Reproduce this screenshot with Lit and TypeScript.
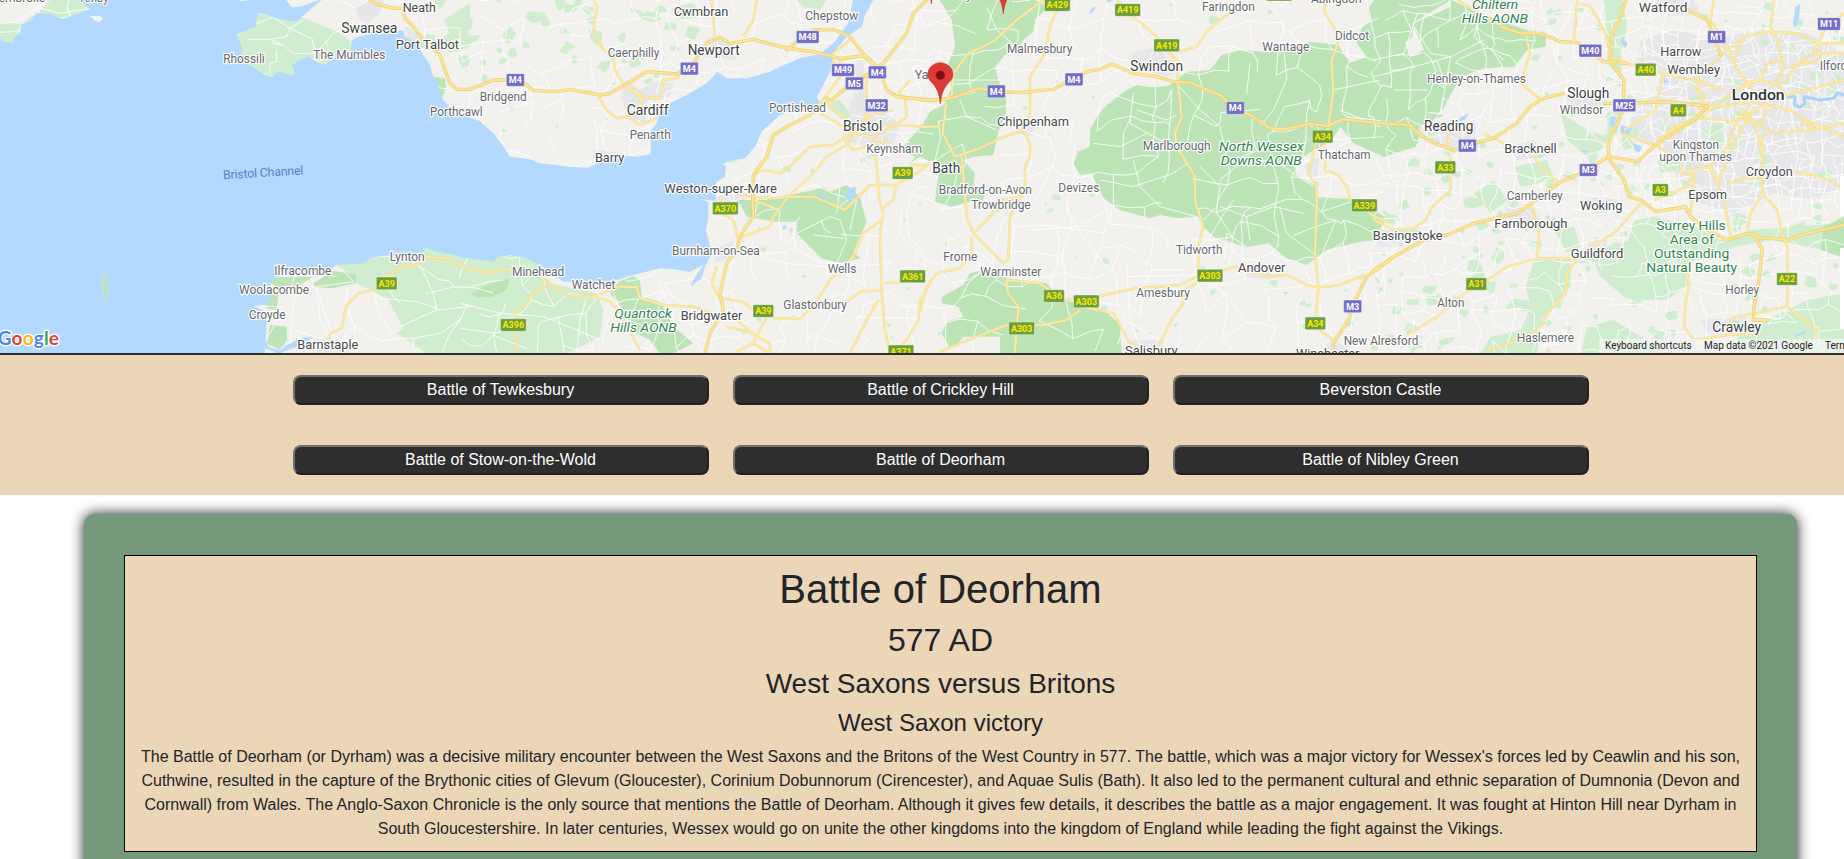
import { LitElement, html, svg, css } from "lit";
import { customElement } from "lit/decorators.js";

/* Map drawing units are thirds of a pixel; each sheet has its own x origin. */
const A = 0, B = 1380, C = 2760, D = 4122;

type Shape = [number, string];
type Label = [number, string, number, number, number, string];
type Shield = [number, string, number, number];

const forest: Shape[] = [
  [C, "M60,0H345L385,20L345,60L340,95L310,120L290,150L255,165L225,200L235,240L258,290L258,340L235,395L220,465L165,470L130,480L165,520L160,560L195,575L190,600L130,610L95,620L45,605L50,560L60,500L0,470L-30,490L-15,470L-60,450L10,370L30,335L70,315L95,265L85,190L105,140L95,60Z"],
  [C, "M800,215L870,210L905,165L960,150L1050,157L1170,125L1255,135L1290,190L1340,170L1310,130L1325,85L1355,60L1410,75L1450,110L1475,190L1480,270L1560,320L1500,350L1495,430L1392,470L1300,430L1262,380L1235,420L1150,470L1125,500L1130,525L1190,560L1195,592L1300,597L1395,650L1370,720L1320,725L1220,750L1160,795L1100,775L1045,730L980,742L880,710L850,680L835,650L770,655L720,645L690,655L600,630L545,590L515,520L480,525L460,490L475,455L510,440L510,390L530,350L560,315L620,270L650,255L690,262L745,258L770,240Z"],
  [C, "M210,805L260,835L380,850L430,900L520,920L560,935L600,975L605,1060H240L240,1010L130,1010L110,1035L85,1040L65,1000L80,965L130,950L115,920L65,910L65,890L130,855L150,820Z"],
  [B, "M835,600L920,600L985,585L1060,570L1090,562L1110,575L1160,555L1200,590L1208,625L1220,665L1180,755L1200,775L1140,790L1085,775L1010,700L1010,665L945,665L860,650Z"],
  [B, "M450,880L475,845L520,828L540,840L545,890L600,905L640,980L700,1030L640,1060H600L570,1020L510,990L500,940Z"],
  [A, "M810,850L830,832L940,830L900,855L830,860ZM940,850L1000,812L1070,825L1065,850L1000,865L945,862ZM810,975L860,980L862,1020L840,1050L800,1030ZM800,880L835,885L830,930L800,925ZM1300,230L1335,235L1338,260L1326,298Z"],
  [D, "M230,0H0L-20,30L5,90L20,130L60,160L115,110L120,70L230,20ZM115,70L230,0L370,60L515,110L515,140L460,150L420,200L330,205L260,230L200,340L170,335L75,320L0,285L-60,240L10,180L60,200L150,150Z"],
  [D, "M0,90L60,180L170,160L200,340L75,320L0,290ZM0,285L130,335L210,345L130,385L125,440L30,470L0,455Z"],
  [D, "M1410,650L1350,680L1340,750L1400,770L1410,765ZM1400,780L1410,745V775Z"],
];

const park: Shape[] = [
  [A, "M1165,900L1210,985L1190,1000L1280,1060H1700L1800,1010L1810,930L1790,880L1650,850L1600,775L1500,765L1410,778L1280,742L1262,765L1115,773L1010,795L1060,845L1130,880Z"],
  [A, "M0,66L60,72L95,62L150,0H240L270,28L190,57L108,40L64,73L36,128L0,128Z"],
  [A, "M775,40L820,52L850,60L905,50L1000,90L1050,120L1052,150L975,195L925,168L875,195L885,222L820,233L728,190L710,103Z"],
  [A, "M1320,120L1400,60L1410,140L1350,160ZM1300,0L1340,0L1320,30ZM1330,60L1410,10V70L1350,100Z"],
  [D, "M690,0L745,0L760,80L740,160L745,240L700,190L700,110ZM700,330L740,320L730,400L700,420Z"],
  [D, "M480,780L590,775L590,860L500,960L490,1060H320L350,1010L440,990L470,920L455,860ZM590,790L700,740L850,700L940,760L935,860L880,900L760,900L680,830L660,790Z"],
  [D, "M640,760L760,730L780,660L840,650L960,680L1040,720L1130,690L1400,670V760L1200,720L1080,740L940,790L700,820ZM540,690L600,680L620,740L580,760ZM620,1060L640,980L720,960L800,1010L900,1060Z"],
  [D, "M1180,960L1300,900L1410,880V1060H1120L1080,1020ZM300,580L360,540L400,600L350,640ZM560,340L640,390L690,440L650,480L580,420ZM420,500L520,480L540,540L440,560ZM1000,380L1050,370L1045,430L1005,440ZM850,480L930,470L910,510L860,520Z"],
  [B, "M1090,310L1140,300L1180,350L1150,360ZM480,100L500,100L490,130ZM1010,0H1100L1080,30L1030,20ZM640,20L700,10L720,50L650,60Z"],
];

const moor: Shape[] = [
  [B, "M30,880L90,850L150,835L140,870L100,890L50,893Z"],
  [A, "M305,820L318,824L322,860L328,890L312,892Z"],
];

const urban: Shape[] = [
  [D, "M800,120L900,90L1030,120L1100,100L1180,90L1300,100L1410,160V560L1320,600L1200,580L1080,640L950,600L900,520L860,440L760,400L780,330L740,300L840,290L860,220L790,180Z"],
  [D, "M130,370L300,360L310,420L220,445L140,420ZM560,280L690,290L700,320L600,320ZM390,620L480,610L500,690L420,690ZM650,590L740,600L720,640L660,640ZM980,960L1120,950L1100,1010L1000,1000ZM640,720L700,720L690,790L650,780ZM1150,540L1190,530L1180,600L1150,590ZM1020,540L1060,560L1030,620L1000,610ZM840,0H960L980,40L880,50ZM400,440L480,420L520,470L430,480ZM0,690L100,690L90,740L10,740Z"],
  [B, "M500,240L540,270L600,240L640,250L630,290L560,310L560,370L510,360L480,290ZM1170,300L1200,290L1260,330L1320,370L1300,440L1220,440L1150,420ZM1190,180L1210,180L1215,300L1180,300ZM770,590L850,580L860,610L780,620ZM740,110L800,120L830,180L730,170ZM400,450L490,460L480,490L400,480ZM820,720L780,740L760,790L820,770Z"],
  [C, "M630,160L710,140L740,170L790,210L740,230L640,200ZM40,500L100,480L130,520L60,545ZM980,790L1060,800L1050,840L980,830ZM280,350L350,370L330,410L290,400ZM230,590L300,600L260,640ZM1150,500L1200,460L1190,540ZM630,1020L730,1020L720,1060H640ZM1235,1020L1280,1040V1060H1200Z"],
  [A, "M1065,20L1120,0H1150L1140,40L1105,70L1080,60ZM1215,80L1270,110L1250,130L1220,110ZM940,1020L1000,1010L1060,1050L950,1060Z"],
];

const waterWest =
  "M0,0H1410V1060H0Z" +
  "M0,0H240L270,28L220,45L190,57L150,42L108,40L95,62L64,73L60,98L45,108L36,128L12,126L0,115Z" +
  "M270,48L300,48L310,57L298,67L285,62ZM718,0H745L735,3H722Z" +
  "M858,0L875,22L900,20L930,10L960,0Z" +
  "M775,40L795,42L820,52L850,60L890,65L905,50L935,25L965,0H1410V350L1370,335L1340,312L1326,295L1310,245L1298,225L1290,195L1270,165L1250,130L1215,112L1210,92L1190,92L1130,98L1070,112L1055,122L1052,150L1000,175L975,195L950,185L925,168L900,180L875,195L885,222L865,225L840,215L825,218L820,233L790,222L750,195L728,190L725,140L710,103L740,90L765,80Z" +
  "M305,820L318,824L322,860L328,890L312,892Z" +
  "M1280,742L1300,752L1410,775V1060H840L890,1040L940,1012L910,1012L860,1035L840,1052L805,1040L797,1020L800,960L795,935L762,918L800,915L815,880L810,850L830,830L990,810L1010,795L1090,790L1115,773L1140,768L1262,765Z" +
  "M795,1045L825,1055V1060H795Z";

const waterChannel =
  "M0,345L58,362L100,400L120,425L150,470L210,478L240,490L330,500L385,503L420,485L500,468L530,470L572,463V425L570,395L590,370L600,335L630,310L680,285L740,250L772,215L800,235L860,235L930,215L960,200L1020,175L1080,162L1120,130L1165,70L1175,20L1180,0H1240L1215,45L1205,80L1160,110L1135,140L1120,165L1110,215L1090,255L1070,290L1080,310L1010,325L960,345L905,395L885,440L855,475L820,480L788,492L798,500L795,530L770,545L765,570L770,602L720,598L745,606L745,650L738,690L748,730L755,760L735,800L725,835L700,852L698,862L717,885L693,855L700,840L730,795L690,815L640,808L600,805L520,825L470,840L420,845L310,845L260,808L200,775L150,765L115,772L100,785L0,772Z";

const lakes: Shape[] = [
  [B, "M1075,578L1105,592L1100,600L1080,592ZM1165,565L1188,560L1185,590L1168,605L1155,590ZM968,678L980,676L978,688L968,688Z"],
  [C, "M505,45L515,25L530,20L515,40ZM560,0H580L565,8ZM1090,875L1105,878L1095,884Z"],
  [D, "M1265,20L1278,12L1275,60L1262,85L1256,70ZM745,110L760,130L755,145L742,130ZM710,350L725,350L720,385L708,375ZM740,375L775,385L760,405L740,400ZM780,430L805,440L795,458L780,450ZM255,355L285,338L275,358L258,364ZM870,235L885,245L870,250ZM1262,1005L1298,992L1290,1002L1265,1010ZM620,450L645,452L635,460Z"],
];

const motorways: Shape[] = [
  [A, "M1110,0L1125,10L1180,25L1210,25L1215,55L1240,80L1270,120L1320,165L1335,210L1350,250L1370,268H1410L1480,240H1560L1600,272L1670,275L1710,268L1800,285L1830,280L1900,240L1940,215L2030,222L2080,190L2100,160L2120,130L2160,112L2190,130L2260,118L2340,140L2400,150L2440,155L2520,175L2590,168L2640,210L2660,270L2690,290L2790,300L2850,295"],
  [C, "M0,300H60L110,290L175,265L240,275L300,278L400,268L440,245L500,215L540,208L575,192L640,220L710,230L760,245L810,248L900,285L940,320L990,345L1050,385L1090,388L1170,372L1225,378L1265,358L1380,370L1470,375L1500,405L1545,430L1600,450L1660,430L1720,415L1790,370L1830,320L1870,295L1930,280"],
  [B, "M980,150L1010,125L1060,90L1120,88L1170,110L1205,155L1250,200L1270,190L1340,100L1360,40L1400,0"],
  [B, "M1250,200L1220,225L1150,270L1115,300L1100,295L1080,310L1050,345L990,375L940,405L920,470L880,525L878,600L880,650L845,700L830,750L800,790L780,880L790,930L750,1000L735,1060"],
  [D, "M755,0L740,50L715,100L708,170L720,200L750,240L748,330L715,400L702,440L705,475L750,540L765,590L800,600L845,635L935,620L950,650L1000,690L1060,720L1120,700L1155,712L1240,720L1300,700L1410,675"],
  [D, "M0,810L60,770L150,720L220,705L300,670L430,640L520,575L560,545L620,520L705,470L790,485L850,430L960,360L1000,320"],
  [D, "M690,310L760,310L880,305L1000,318M380,80L440,100L500,100L560,125L610,128L690,185L760,190M940,30L1000,60L1020,110L1040,165"],
  [C, "M1410,780L1340,830L1310,890L1285,960L1240,1030V1060"],
  [D, "M1140,700L1165,750L1155,840L1140,920L1138,960L1180,960"],
];

const aroads: Shape[] = [
  [A, "M985,1020L990,1000L1025,985L1040,915L1075,880L1120,870L1160,830L1210,800L1260,792L1280,770L1340,775L1400,805L1460,818L1520,808L1600,820L1650,850L1700,885L1780,890L1860,860L1910,862L1920,895L1990,915L2080,920L2150,945L2210,960L2270,1010L2310,1030V1060"],
  [B, "M270,850L220,875L205,905L165,940L170,1060M400,890L450,905L480,940L540,1050M400,0L412,20L400,90L430,150L460,170L465,210L490,250L540,290L545,330M490,250L550,290L600,295L610,240L650,235L680,200M415,290L440,330L470,355L500,350L540,375L590,355M755,0L765,110M890,0L880,60L850,110M545,290L530,340"],
  [B, "M1100,300L1110,320L1150,350L1190,390M1080,340L1170,390M880,525L910,510L965,520L1010,480L1050,440L1120,435L1200,380L1240,340L1300,330M1120,200V160L1170,120M1220,230V340L1200,380M1190,390L1160,435L1100,470L1060,520L985,590L940,595L870,590L830,580M985,590L1060,590L1155,630L1230,555L1310,555L1400,500M985,590L940,650L930,680L850,710M945,625L880,600M780,590L785,640L820,660L835,720L830,750M1240,410L1250,500L1258,600L1270,640L1260,700L1265,880L1275,990L1290,1060M1265,660L1210,700L1180,770L1110,840L1060,920L1020,955H940M1310,555L1300,600L1270,625M780,895L850,905L880,930M880,1000L800,980M920,950L880,1030L830,1055M880,1030L930,1060M1265,870L1200,875L1160,905M1255,900L1220,960L1170,1060M1275,850L1330,845M1150,420L1180,450L1220,440L1290,420M1180,400L1240,410L1300,380L1340,350L1335,290L1290,280M1220,370L1400,380M1315,280L1350,240M770,800L755,850L780,900M1410,850L1380,900L1375,960L1340,1020L1300,1060M1190,170L1140,180V230L1090,300"],
  [C, "M-30,495L30,495M0,380L60,380M95,290L100,220L145,160L220,125L290,60L370,0M78,310L68,400L105,470L180,445L240,415L310,390L330,430V470L315,500V560L270,650L265,780L250,790L160,700L140,650L135,590L125,470M410,30L390,80L375,160L330,230L330,340L310,390M160,700L210,650L250,600L310,590M155,710V760L120,805L50,820L20,860L0,935M590,0L640,50L710,110L740,150L770,180L775,260L785,350L765,400L770,440L825,530V600L850,680L835,740V830M780,155L830,140L860,95L900,60L940,30M1215,0V40L1260,110L1235,180L1240,270L1225,380L1215,420V510L1255,525L1285,570L1290,600L1350,640L1390,665H1410M1190,420L1165,520L1190,560V620L1185,760L1195,860L1185,980L1240,1020M260,840L360,850L430,900L540,888L650,865L780,855L830,830L950,800L1040,830L1100,825L1160,855L1200,862L1260,855L1335,825M485,920L580,940L630,1030L700,1060M480,930L440,960L370,975H260L170,1010L60,1055M258,840L265,880L295,920L290,980L285,1060M830,850L790,870V910L760,950L720,1030L700,1060"],
  [D, "M0,660L60,690L120,685L155,660L175,620L230,570V470M225,445L222,380M480,470L500,500L550,545M455,100L468,160L440,250L500,300M610,0L600,120M620,10L650,20L690,90L715,170L760,190L860,220L960,240L1050,270M330,400L390,430M470,610L495,700L490,775L400,800L340,840L270,880L190,950L100,1005M490,775H610L660,735L720,700L800,610M610,775L580,820L575,880L520,940L500,980L440,1020L340,1050M250,0L330,50L430,100M870,590L940,560L955,520H920V480L850,440L740,400M870,220L850,300L845,330L750,390M840,600L940,560M960,520L950,640M1000,490L1030,550L1080,430L1130,340M1060,550L1120,535L1165,530M1165,400V580L1130,640L1120,690M1165,580L1210,630L1225,710L1240,740V920L1330,990L1325,1020M935,760L945,860L935,900L930,980L960,1020L1060,1005L1140,1000M1060,980L1080,950L1150,940L1240,918M1260,515L1320,525L1380,545L1410,575"],
];

const cityRoads: Shape[] = [
  [D, "M1020,0L1010,60L1060,140L1090,210L1120,250L1150,290M1080,140L1110,110L1180,95L1270,100L1330,130L1410,130M1200,0L1190,80L1210,120L1230,200L1200,260M1410,40L1350,90L1320,160L1270,190L1230,250M1150,300L1220,290L1300,270L1410,240M1160,310L1250,330L1290,360L1410,410M1150,300L1050,320L980,310M1170,230L1100,260L1050,300L980,350L900,380L850,440M1060,360L980,355L930,370L850,420M1110,330L1080,380L1060,440L1010,500M1130,350L1150,400L1165,470M1120,350L1200,400L1300,390L1410,370M1150,330L1060,370M1160,240L1180,190L1230,180M970,220L980,300M1320,160L1410,160M1280,370L1330,380M940,510L1010,500L1050,600L1070,710M1080,180L1100,130L1060,145L1030,180L980,220M1130,300L1180,330L1160,370L1110,360ZM1330,130L1340,180L1250,200M970,330L990,290L960,260M1085,270L1150,240L1215,255L1240,300"],
];

const minor: Shape[] = [
  [A, "M0,70L50,66L75,50L110,22L180,40L270,25M745,118H810L860,110L870,85L910,60M810,118L850,135L880,160L950,160L1000,100L1060,70M830,150V185L810,190V220M850,135L815,130M870,1040L880,900L940,860M950,860L960,960L1000,1020M1120,870L1140,950L1180,1000M1260,795L1300,880L1310,930L1410,920M1310,930L1200,980M1140,895L1250,905L1310,925M880,990L980,1020M1020,800L1060,845L940,862"],
  [B, "M0,985L110,1000L160,980M0,910L120,940L250,950L350,990L420,1020M380,890L360,960L350,1060M1010,700L1110,650L1140,660L1160,720L1130,790M1060,705L1150,715M1140,560L1130,640M1190,600L1170,690M820,760L860,760L980,790L1100,800M600,850L640,960"],
  [C, "M200,20L230,90L300,150M100,240H240M120,300L140,350L230,390M640,280L630,370L720,420L760,430M650,330L740,360L770,345M770,250L840,330L900,380L920,470M990,190L980,280M1090,130L1100,240L1060,330L1020,380M520,430L600,440L680,400M540,540L640,560L760,520L800,490M640,480L660,560L720,620L830,650M840,500L900,560L890,620L850,660M900,540L960,490L1060,480L1180,560M900,620L980,650L1060,620L1150,640M980,650L990,720M1080,620L1100,700L1180,760M1235,420L1390,410M1260,330L1380,380M1240,270L1380,240M870,710L900,660L940,600M620,800L630,960L660,1040M620,830L830,825M440,620L480,700L560,800M330,690L480,680L560,630M910,800L920,700L980,740"],
  [D, "M0,230L120,200L230,170L330,120M120,80L170,160L230,170L200,340M330,10L300,110L390,180M0,180L90,160L130,40M60,270L160,270"],
];

const labels: Label[] = [
  [A, "embroke", -4, 136, 6, "s"], [A, "Tenby", 235, 326, 6, "s"], [A, "Neath", 1208, 1308, 36, "m"],
  [A, "Swansea", 1024, 1192, 99, "l"], [A, "Port Talbot", 1187, 1377, 146, "m"], [A, "The Mumbles", 940, 1156, 178, "s"],
  [A, "Rhossili", 670, 794, 190, "s"], [A, "Porthcawl", 1290, 1448, 347, "s"], [A, "Lynton", 1169, 1274, 784, "s"],
  [A, "Ilfracombe", 823, 994, 826, "s"], [A, "Woolacombe", 717, 927, 883, "s"], [A, "Croyde", 746, 857, 958, "s"],
  [A, "Barnstaple", 892, 1075, 1048, "m"],
  [B, "Cwmbran", 641, 805, 48, "m"], [B, "Chepstow", 1036, 1195, 60, "s"], [B, "Caerphilly", 443, 598, 172, "s"],
  [B, "Newport", 683, 839, 165, "l"], [B, "Bridgend", 59, 200, 303, "s"], [B, "Cardiff", 500, 626, 345, "l"],
  [B, "Penarth", 509, 632, 418, "s"], [B, "Barry", 405, 493, 487, "m"], [B, "Portishead", 927, 1098, 337, "s"],
  [B, "Bristol", 1149, 1267, 393, "l"], [B, "Keynsham", 1219, 1386, 460, "s"], [B, "Yate", 1364, 1438, 238, "s"],
  [B, "Weston-super-Mare", 613, 951, 579, "m"], [B, "Burnham-on-Sea", 636, 899, 766, "s"], [B, "Minehead", 156, 313, 828, "s"],
  [B, "Watchet", 335, 466, 867, "s"], [B, "Wells", 1103, 1189, 818, "s"], [B, "Glastonbury", 970, 1161, 927, "s"],
  [B, "Bridgwater", 662, 847, 961, "m"], [B, "Quantock", 463, 636, 955, "p"], [B, "Hills AONB", 451, 650, 996, "p"],
  [C, "Tetbury", 38, 155, -2, "s"], [C, "Malmesbury", 261, 457, 158, "s"], [C, "Faringdon", 846, 1004, 32, "s"],
  [C, "Abingdon", 1173, 1325, 10, "s"], [C, "Didcot", 1245, 1347, 121, "s"], [C, "Wantage", 1027, 1168, 154, "s"],
  [C, "Swindon", 631, 789, 214, "l"], [C, "Chippenham", 231, 447, 378, "m"], [C, "Marlborough", 668, 872, 451, "s"],
  [C, "North Wessex", 897, 1151, 453, "p"], [C, "Downs AONB", 902, 1145, 494, "p"], [C, "Thatcham", 1193, 1352, 476, "s"],
  [C, "Bath", 37, 121, 519, "l"], [C, "Bradford-on-Avon", 56, 336, 581, "s"], [C, "Trowbridge", 154, 332, 626, "s"],
  [C, "Devizes", 415, 538, 576, "s"], [C, "Frome", 70, 172, 782, "s"], [C, "Warminster", 181, 364, 827, "s"],
  [C, "Tidworth", 768, 907, 763, "s"], [C, "Andover", 954, 1096, 816, "m"], [C, "Amesbury", 649, 810, 892, "s"],
  [C, "Salisbury", 615, 773, 1066, "m"], [C, "Winchester", 1128, 1318, 1075, "m"],
  [D, "Chiltern", 294, 433, 26, "p"], [D, "Hills AONB", 263, 462, 68, "p"], [D, "Watford", 794, 941, 36, "m"],
  [D, "Harrow", 859, 982, 169, "m"], [D, "Wembley", 880, 1038, 222, "m"], [D, "Ilford", 1337, 1420, 211, "s"],
  [D, "London", 1073, 1232, 300, "x"], [D, "Henley-on-Thames", 159, 456, 248, "s"], [D, "Slough", 580, 706, 294, "l"],
  [D, "Windsor", 557, 688, 343, "s"], [D, "Reading", 150, 298, 393, "l"], [D, "Bracknell", 391, 548, 458, "m"],
  [D, "Kingston", 896, 1035, 446, "s"], [D, "upon Thames", 856, 1074, 482, "s"], [D, "Croydon", 1115, 1256, 528, "m"],
  [D, "Camberley", 398, 566, 599, "s"], [D, "Epsom", 943, 1059, 598, "m"], [D, "Woking", 618, 745, 631, "m"],
  [D, "Farnborough", 361, 580, 684, "m"], [D, "Basingstoke", -4, 206, 720, "m"], [D, "Guildford", 590, 748, 773, "m"],
  [D, "Surrey Hills", 847, 1055, 690, "r"], [D, "Area of", 887, 1020, 732, "r"], [D, "Outstanding", 840, 1066, 774, "r"],
  [D, "Natural Beauty", 817, 1089, 815, "r"], [D, "Horley", 1054, 1155, 882, "s"], [D, "Alton", 190, 271, 921, "s"],
  [D, "Haslemere", 428, 600, 1025, "s"], [D, "New Alresford", -91, 133, 1034, "s"], [D, "Crawley", 1015, 1161, 995, "l"],
  [D, "Horsham", 860, 1015, 1070, "f"],
];

const shields: Shield[] = [
  [A, "A39", 1160, 850], [B, "M4", 166, 240], [B, "M4", 688, 206], [B, "M48", 1043, 111], [B, "M49", 1149, 210],
  [B, "M5", 1183, 250], [B, "M4", 1252, 217], [B, "M32", 1250, 316], [B, "A39", 1328, 519], [B, "A370", 796, 625],
  [B, "A361", 1358, 829], [B, "A39", 910, 933], [B, "A396", 160, 975], [B, "A371", 1323, 1054],
  [C, "A429", 412, 15], [C, "A419", 623, 30], [C, "A419", 740, 136], [C, "A420", 1078, -16], [C, "M4", 229, 274], [C, "M4", 462, 238],
  [C, "M4", 946, 324], [C, "A34", 1208, 410], [C, "A339", 1333, 616], [C, "A303", 870, 827], [C, "A36", 402, 888],
  [C, "A303", 499, 904], [C, "A303", 305, 985], [C, "M3", 1298, 919], [C, "A34", 1186, 970],
  [D, "M11", 1365, 72], [D, "M1", 1028, 111], [D, "M40", 649, 152], [D, "A40", 815, 209], [D, "M25", 751, 316],
  [D, "A4", 913, 331], [D, "M4", 280, 437], [D, "A33", 214, 502], [D, "M3", 643, 510], [D, "A3", 859, 570],
  [D, "A31", 307, 852], [D, "A22", 1239, 837],
];

function seeded(seed: number) {
  let s = seed;
  return () => ((s = (s * 16807) % 2147483647) / 2147483647);
}

/* Irregular web of country lanes. */
function lanes(x0: number, y0: number, x1: number, y1: number, step: number, keep: number, seed: number) {
  const rnd = seeded(seed);
  const cols = Math.ceil((x1 - x0) / step);
  const rows = Math.ceil((y1 - y0) / step);
  const pts = Array.from({ length: rows + 1 }, (_, r) =>
    Array.from({ length: cols + 1 }, (_, c) => [
      Math.round(x0 + (c + (rnd() - 0.5) * 0.9) * step),
      Math.round(y0 + (r + (rnd() - 0.5) * 0.9) * step),
    ]));
  let d = "";
  const link = (a: number[], b: number[]) => {
    const mx = Math.round((a[0] + b[0]) / 2 + (rnd() - 0.5) * step * 0.3);
    const my = Math.round((a[1] + b[1]) / 2 + (rnd() - 0.5) * step * 0.3);
    d += `M${a}L${mx},${my}L${b}`;
  };
  for (let r = 0; r < rows; r++) {
    for (let c = 0; c < cols; c++) {
      if (rnd() < keep) link(pts[r][c], pts[r][c + 1]);
      if (rnd() < keep) link(pts[r][c], pts[r + 1][c]);
    }
  }
  return d;
}

/* Small scattered woods. */
function copses(x0: number, y0: number, x1: number, y1: number, n: number, size: number, seed: number) {
  const rnd = seeded(seed);
  let d = "";
  for (let i = 0; i < n; i++) {
    const cx = x0 + rnd() * (x1 - x0);
    const cy = y0 + rnd() * (y1 - y0);
    const s = size * (0.4 + rnd());
    const corners = 5;
    const pts = Array.from({ length: corners }, (_, k) => {
      const a = (k / corners) * Math.PI * 2 + rnd() * 0.8;
      const q = s * (0.4 + rnd() * 0.6);
      return `${Math.round(cx + Math.cos(a) * q)},${Math.round(cy + Math.sin(a) * q * 0.8)}`;
    });
    d += "M" + pts.join("L") + "Z";
  }
  return d;
}

const laneWeb =
  lanes(0, 0, 1400, 1060, 90, 0.4, 11) + lanes(1380, 0, 2760, 1060, 64, 0.55, 23) +
  lanes(2760, 0, 4122, 1060, 76, 0.65, 37) + lanes(4122, 0, 5532, 1060, 52, 0.68, 41);
const cityWeb = lanes(4930, 90, 5532, 620, 34, 0.7, 53);
const woods =
  copses(1230, 0, 2100, 200, 50, 30, 5) + copses(1400, 200, 2000, 420, 12, 16, 8) +
  copses(2200, 350, 2760, 1060, 22, 14, 9) + copses(2760, 0, 4122, 1060, 70, 15, 12) +
  copses(4122, 380, 5000, 1060, 130, 24, 15) + copses(4600, 0, 5532, 420, 60, 20, 17) +
  copses(5000, 400, 5532, 1060, 60, 24, 19);

const draw = (shapes: Shape[], cls: string) =>
  shapes.map(([x, d]) => svg`<path class=${cls} transform="translate(${x} 0)" d=${d}></path>`);

const pin = (x: number, y: number) => svg`
  <g transform="translate(${x} ${y})">
    <path class="pin" d="M0,0C-4,-35 -12,-50 -25,-64C-34,-73 -38,-79 -38,-88A38,36 0 0 1 38,-88C38,-79 34,-73 25,-64C12,-50 4,-35 0,0Z"></path>
    <circle class="pin-dot" cx="0" cy="-86" r="13.5"></circle>
  </g>`;

@customElement("county-map")
class CountyMap extends LitElement {
  static styles = css`
    :host { display: block; overflow: hidden; position: relative; font-family: Roboto, sans-serif; }
    .frame { height: 353px; border-bottom: 2px solid #2e2e2e; overflow: hidden; position: relative; }
    .sheet { display: block; width: 1844px; height: 353px; }
    .land { fill: #f3f1ee; }
    .forest { fill: #bce4b7; }
    .park { fill: #d1edcf; }
    .moor { fill: #bce4b7; }
    .urban { fill: #e7e7ea; }
    .water { fill: #b3d9ff; }
    .lane { fill: none; stroke: #fff; stroke-width: 3; stroke-linejoin: round; opacity: 0.85; }
    .m-case { fill: none; stroke: #efcd70; stroke-width: 10; stroke-linejoin: round; stroke-linecap: round; }
    .m-core { fill: none; stroke: #fbe596; stroke-width: 6; stroke-linejoin: round; stroke-linecap: round; }
    .a-case { fill: none; stroke: #f3d985; stroke-width: 7.5; stroke-linejoin: round; }
    .a-core { fill: none; stroke: #fcebab; stroke-width: 4.5; stroke-linejoin: round; }
    .thames { fill: none; stroke: #a9d2fb; stroke-width: 9; stroke-linejoin: round; }
    text { paint-order: stroke; stroke: #fff; stroke-width: 7; stroke-linejoin: round; }
    .s { font-size: 37px; fill: #65696d; }
    .m { font-size: 39px; fill: #46494c; }
    .l { font-size: 42px; fill: #3c3f42; }
    .x { font-size: 44px; font-weight: 500; fill: #303336; }
    .p { font-size: 40px; font-style: italic; fill: #2f8650; }
    .r { font-size: 40px; fill: #2f8650; }
    .f { font-size: 39px; fill: #b9babb; }
    .sea { font-size: 37px; fill: #5b7fcb; stroke: none; }
    .shield-m { fill: #736cc8; stroke: #fff; stroke-opacity: 0.6; stroke-width: 2; }
    .shield-a { fill: #6b9f3e; stroke: #fff; stroke-opacity: 0.6; stroke-width: 2; }
    .code-m, .code-a { font-size: 27px; font-weight: 700; text-anchor: middle; stroke: none; fill: #fff; }
    .code-a { fill: #fbe800; }
    .pin { fill: #dc3b35; stroke: #c92f2b; stroke-width: 1.5; }
    .pin-dot { fill: #7a0f10; }
    .logo { font-family: Lato, sans-serif; font-size: 57px; font-weight: 700; stroke-width: 8; }
    .g-blue { fill: #4d86ee; } .g-red { fill: #e04436; } .g-yellow { fill: #f4b912; } .g-green { fill: #39a557; }
    .control { fill: #fff; }
    .credits { position: absolute; left: 1599px; bottom: 0; display: flex; height: 14px; line-height: 14px; font-size: 10px; color: #222; white-space: nowrap; }
    .credits span { background: rgba(245, 245, 245, 0.7); padding: 0 6px; box-sizing: content-box; }
    .credits .keys { width: 86px; padding-right: 7px; }
    .credits .data { width: 109px; }
  `;

  render() {
    return html`
      <div class="frame">
      <svg class="sheet" viewBox="0 0 5532 1059" preserveAspectRatio="none">
        <rect class="land" width="5532" height="1059"></rect>
        ${draw(urban, "urban")}
        <path class="park" d=${woods}></path>
        ${draw(park, "park")}${draw(forest, "forest")}${draw(moor, "moor")}
        <path class="lane" d=${laneWeb}></path>
        <path class="lane" d=${cityWeb}></path>
        ${draw(minor, "lane")}
        <path class="water" fill-rule="evenodd" d=${waterWest}></path>
        <path class="water" transform="translate(1380 0)" d=${waterChannel}></path>
        ${draw(lakes, "water")}
        <path class="thames" transform="translate(4122 0)" d="M1190,300L1230,290L1262,290V315L1278,322L1292,310L1290,290L1340,300L1380,295L1390,278L1410,285"></path>
        ${draw(cityRoads, "a-case")}${draw(aroads, "a-case")}${draw(cityRoads, "a-core")}${draw(aroads, "a-core")}
        ${draw(motorways, "m-case")}${draw(motorways, "m-core")}
        ${labels.map(([o, t, x0, x1, y, k]) => svg`<text class=${k} x=${o + x0} y=${y} textLength=${x1 - x0} lengthAdjust="spacingAndGlyphs">${t}</text>`)}
        <text class="sea" transform="translate(670 538) rotate(-3.6)" textLength="241">Bristol Channel</text>
        ${shields.map(([o, t, x, y]) => {
          const w = t.length === 2 ? (t[0] === "M" ? 54 : 48) : t.length === 3 ? (t[0] === "M" ? 68 : 62) : 77;
          const k = t[0] === "M" ? "m" : "a";
          return svg`<rect class="shield-${k}" x=${o + x - w / 2} y=${y - 19} width=${w} height="38" rx="4"></rect>
            <text class="code-${k}" x=${o + x} y=${y + 10}>${t}</text>`;
        })}
        ${pin(2821, 312)}${pin(3010, 42)}${pin(2794, 12)}
        <rect class="control" x="5520" y="528" width="20" height="120" rx="4"></rect>
        <rect class="control" x="5520" y="744" width="20" height="243" rx="4"></rect>
        <text class="logo" x="-7" y="1036" textLength="184"><tspan class="g-blue">G</tspan><tspan class="g-red">o</tspan><tspan class="g-yellow">o</tspan><tspan class="g-blue">g</tspan><tspan class="g-green">l</tspan><tspan class="g-red">e</tspan></text>
      </svg>
      <div class="credits"><span class="keys">Keyboard shortcuts</span><span class="data">Map data ©2021 Google</span><span>Terms of Use</span></div>
      </div>
    `;
  }
}

const battles = [
  "Battle of Tewkesbury", "Battle of Crickley Hill", "Beverston Castle",
  "Battle of Stow-on-the-Wold", "Battle of Deorham", "Battle of Nibley Green",
];

@customElement("app-root")
class AppRoot extends LitElement {
  static styles = css`
    :host { display: block; height: 859px; overflow: hidden; background: #fff; font: 16px/1.5 "Liberation Sans", Arial, sans-serif; color: #212529; }
    * { box-sizing: border-box; }
    .page { width: 1881px; }
    .choices { height: 140px; background: #ecd6b8; padding-top: 20px; }
    .grid { width: 1320px; margin: 0 auto; padding: 0 12px; display: grid; grid-template-columns: repeat(3, 1fr); column-gap: 24px; row-gap: 40px; }
    .choice { height: 30px; padding: 0 6px; border: 2px solid; border-color: #6d7072 #202122 #202122 #6d7072; border-radius: 8px; background: #2e2e2e; color: #fff; font: inherit; line-height: 24px; text-align: center; }
    .panel { width: 1713px; margin: 19px auto 0; padding: 41px 40px; background: #749a7b; border-radius: 10px; box-shadow: 0 0 14px #1e1f22; }
    .story { width: 1633px; border: 1px solid #000; background: #ecd6b8; padding: 9px 15px 10px; text-align: center; }
    h1, h2, h3, h4 { margin: 0 0 8px; font-weight: 500; line-height: 1.2; }
    h1 { font-size: 40px; } h2 { font-size: 32px; } h3 { font-size: 28px; }
    h4 { font-size: 24px; margin-bottom: 7px; }
    p { margin: 0; }
  `;

  render() {
    return html`
      <div class="page">
        <county-map></county-map>
        <nav class="choices">
          <div class="grid">${battles.map((b) => html`<button class="choice">${b}</button>`)}</div>
        </nav>
        <main class="panel">
          <article class="story">
            <h1>Battle of Deorham</h1>
            <h2>577 AD</h2>
            <h3>West Saxons versus Britons</h3>
            <h4>West Saxon victory</h4>
            <p>The Battle of Deorham (or Dyrham) was a decisive military encounter between the West Saxons and the Britons of the West Country in 577. The battle, which was a major victory for Wessex's forces led by Ceawlin and his son, Cuthwine, resulted in the capture of the Brythonic cities of Glevum (Gloucester), Corinium Dobunnorum (Cirencester), and Aquae Sulis (Bath). It also led to the permanent cultural and ethnic separation of Dumnonia (Devon and Cornwall) from Wales. The Anglo-Saxon Chronicle is the only source that mentions the Battle of Deorham. Although it gives few details, it describes the battle as a major engagement. It was fought at Hinton Hill near Dyrham in South Gloucestershire. In later centuries, Wessex would go on unite the other kingdoms into the kingdom of England while leading the fight against the Vikings.</p>
          </article>
        </main>
      </div>
    `;
  }
}
